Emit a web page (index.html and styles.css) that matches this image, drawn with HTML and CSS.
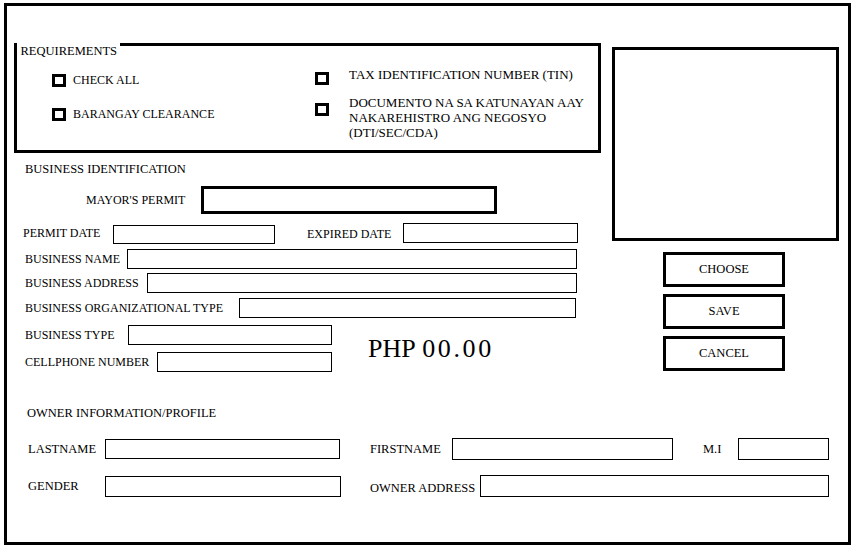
FILE: index.html
```html
<!DOCTYPE html>
<html lang="en">

<head>
    <meta charset="UTF-8">
    <title>Business Permit Registration</title>
    <link rel="stylesheet" href="styles.css">
</head>

<body>
    <div class="frame">
        <div class="top">
            <div class="left">
                <!-- requirements checklist -->
                <div class="reqs">
                    <div class="reqs-title">REQUIREMENTS</div>
                    <div class="req-col">
                        <div class="req-item">
                            <span class="check"></span>
                            <span>CHECK ALL</span>
                        </div>
                        <div class="req-item second">
                            <span class="check"></span>
                            <span>BARANGAY CLEARANCE</span>
                        </div>
                    </div>
                    <div class="req-col right-col">
                        <div class="req-item tin">
                            <span class="check"></span>
                            <span class="req-text">TAX IDENTIFICATION NUMBER (TIN)</span>
                        </div>
                        <div class="req-item doc">
                            <span class="check"></span>
                            <span class="req-text">DOCUMENTO NA SA KATUNAYAN AAY NAKAREHISTRO ANG NEGOSYO (DTI/SEC/CDA)</span>
                        </div>
                    </div>
                </div>

                <!-- business identification -->
                <div class="biz">
                    <div class="section-title">BUSINESS IDENTIFICATION</div>

                    <div class="row r-mayor">
                        <label>MAYOR'S PERMIT</label>
                        <input type="text" class="field thick">
                    </div>

                    <div class="row r-permit">
                        <label class="l-permit">PERMIT DATE</label>
                        <input type="text" class="field f-permit">
                        <label class="l-expired">EXPIRED DATE</label>
                        <input type="text" class="field f-expired">
                    </div>

                    <div class="row r-name">
                        <label>BUSINESS NAME</label>
                        <input type="text" class="field">
                    </div>

                    <div class="row r-address">
                        <label>BUSINESS ADDRESS</label>
                        <input type="text" class="field">
                    </div>

                    <div class="row r-org">
                        <label>BUSINESS ORGANIZATIONAL TYPE</label>
                        <input type="text" class="field">
                    </div>

                    <div class="lower">
                        <div class="lower-rows">
                            <div class="row r-type">
                                <label>BUSINESS TYPE</label>
                                <input type="text" class="field">
                            </div>
                            <div class="row r-cell">
                                <label>CELLPHONE NUMBER</label>
                                <input type="text" class="field">
                            </div>
                        </div>
                        <div class="amount">PHP <span class="amount-value">00.00</span></div>
                    </div>
                </div>
            </div>

            <div class="right">
                <div class="photo"></div>
                <div class="actions">
                    <button class="btn">CHOOSE</button>
                    <button class="btn">SAVE</button>
                    <button class="btn">CANCEL</button>
                </div>
            </div>
        </div>

        <!-- owner information -->
        <div class="owner">
            <div class="section-title owner-title">OWNER INFORMATION/PROFILE</div>

            <div class="orow">
                <label class="o-last">LASTNAME</label>
                <input type="text" class="field f-last">
                <label class="o-first">FIRSTNAME</label>
                <input type="text" class="field f-first">
                <label class="o-mi">M.I</label>
                <input type="text" class="field f-mi">
            </div>

            <div class="orow second">
                <label class="o-last">GENDER</label>
                <input type="text" class="field f-gender">
                <label class="o-oaddr">OWNER ADDRESS</label>
                <input type="text" class="field f-oaddr">
            </div>
        </div>
    </div>
</body>

</html>
```

FILE: styles.css
```css
/* page frame */
body {
    margin: 0;
    background: #fff;
    color: #000;
    font-family: "Liberation Serif", "DejaVu Serif", serif;
}

.frame {
    margin: 3px 0 0 4px;
    width: 847px;
    height: 542px;
    border: 3px solid #000;
    box-sizing: border-box;
}

.top {
    display: flex;
}

.left {
    width: 594px;
}

/* requirements box */
.reqs {
    position: relative;
    display: flex;
    margin: 37px 0 0 7px;
    width: 587px;
    height: 110px;
    border: 3px solid #000;
    box-sizing: border-box;
}

.reqs-title {
    position: absolute;
    top: -3px;
    left: 0;
    padding: 1px 3px 0 3.5px;
    background: #fff;
    font-size: 12.5px;
    line-height: 14px;
}

.req-col {
    width: 298px;
    padding: 28px 0 0 35px;
    box-sizing: border-box;
    font-size: 12px;
    line-height: 13px;
}

.req-item {
    display: flex;
    align-items: center;
    gap: 7px;
}

.req-item.second {
    margin-top: 21px;
}

.check {
    width: 14px;
    height: 13px;
    border: 3px solid #000;
    box-sizing: border-box;
    flex-shrink: 0;
}

.right-col {
    width: 283px;
    padding: 21px 0 0 0;
    font-size: 13px;
    line-height: 15px;
}

.right-col .req-item {
    align-items: flex-start;
    gap: 20px;
}

.req-text {
    width: 250px;
}

.tin .check {
    margin-top: 5px;
}

.doc {
    margin-top: 10px;
}

.doc .check {
    margin-top: 8px;
}

/* business identification */
.biz {
    padding-top: 9px;
}

.section-title {
    padding-left: 18px;
    font-size: 12.5px;
    line-height: 14px;
}

.row {
    display: flex;
    align-items: center;
    height: 20px;
    padding-left: 18px;
    font-size: 12px;
}

.row label {
    white-space: nowrap;
    flex-shrink: 0;
}

.field {
    display: block;
    height: 20px;
    margin: 0;
    padding: 0 4px;
    border: 1px solid #000;
    border-radius: 0;
    box-sizing: border-box;
    background: #fff;
    font: inherit;
    flex-shrink: 0;
}

.field.thick {
    border-width: 3px;
}

.r-mayor {
    margin-top: 10px;
    height: 28px;
    padding-left: 79px;
}

.r-mayor label { width: 115px; }
.r-mayor .field { width: 296px; height: 28px; }

.r-permit {
    margin-top: 9px;
    padding-left: 16px;
}

.l-permit { width: 90px; }
.f-permit { width: 162px; height: 19px !important; margin-top: 2px !important; }
.l-expired { width: 96px; margin-left: 32px; padding-top: 3px; }
.f-expired { width: 175px; }

.r-name { margin-top: 6px; }
.r-name label { width: 102px; }
.r-name .field { width: 450px; }

.r-address { margin-top: 4px; }
.r-address label { width: 122px; }
.r-address .field { width: 430px; }

.r-org { margin-top: 5px; }
.r-org label { width: 214px; }
.r-org .field { width: 337px; }

.lower {
    display: flex;
    align-items: center;
    margin-top: 7px;
}

.r-type label { width: 103px; }
.r-type .field { width: 204px; }

.r-cell { margin-top: 7px; }
.r-cell label { width: 132px; }
.r-cell .field { width: 175px; }

.amount {
    margin-left: 36px;
    font-size: 26px;
    line-height: 30px;
    white-space: nowrap;
}

.amount-value {
    margin-left: 1px;
    letter-spacing: 2.6px;
}

/* photo and buttons */
.right {
    padding: 41px 0 0 11px;
}

.photo {
    width: 227px;
    height: 194px;
    border: 3px solid #000;
    box-sizing: border-box;
}

.actions {
    display: flex;
    flex-direction: column;
    gap: 7px;
    margin: 11px 0 0 51px;
}

.btn {
    width: 122px;
    height: 35px;
    border: 3px solid #000;
    border-radius: 0;
    background: #fff;
    color: #000;
    font-family: "Liberation Serif", "DejaVu Serif", serif;
    font-size: 12.5px;
    padding: 0;
}

/* owner information */
.owner {
    padding-top: 34px;
}

.owner-title {
    padding-left: 20px;
}

.orow {
    display: flex;
    align-items: center;
    height: 22px;
    margin-top: 18px;
    padding-left: 21px;
    font-size: 12.5px;
}

.orow.second {
    margin-top: 15px;
}

.orow label {
    white-space: nowrap;
    flex-shrink: 0;
}

.o-last { width: 77px; }
.f-last { width: 235px; }
.o-first { width: 82px; margin-left: 30px; }
.f-first { width: 221px; height: 22px; }
.o-mi { width: 35px; margin-left: 30px; }
.f-mi { width: 91px; height: 22px; }

.f-gender { width: 236px; height: 21px; }
.o-oaddr { width: 110px; margin-left: 29px; padding-top: 4px; }
.f-oaddr { width: 349px; height: 22px; }
```
